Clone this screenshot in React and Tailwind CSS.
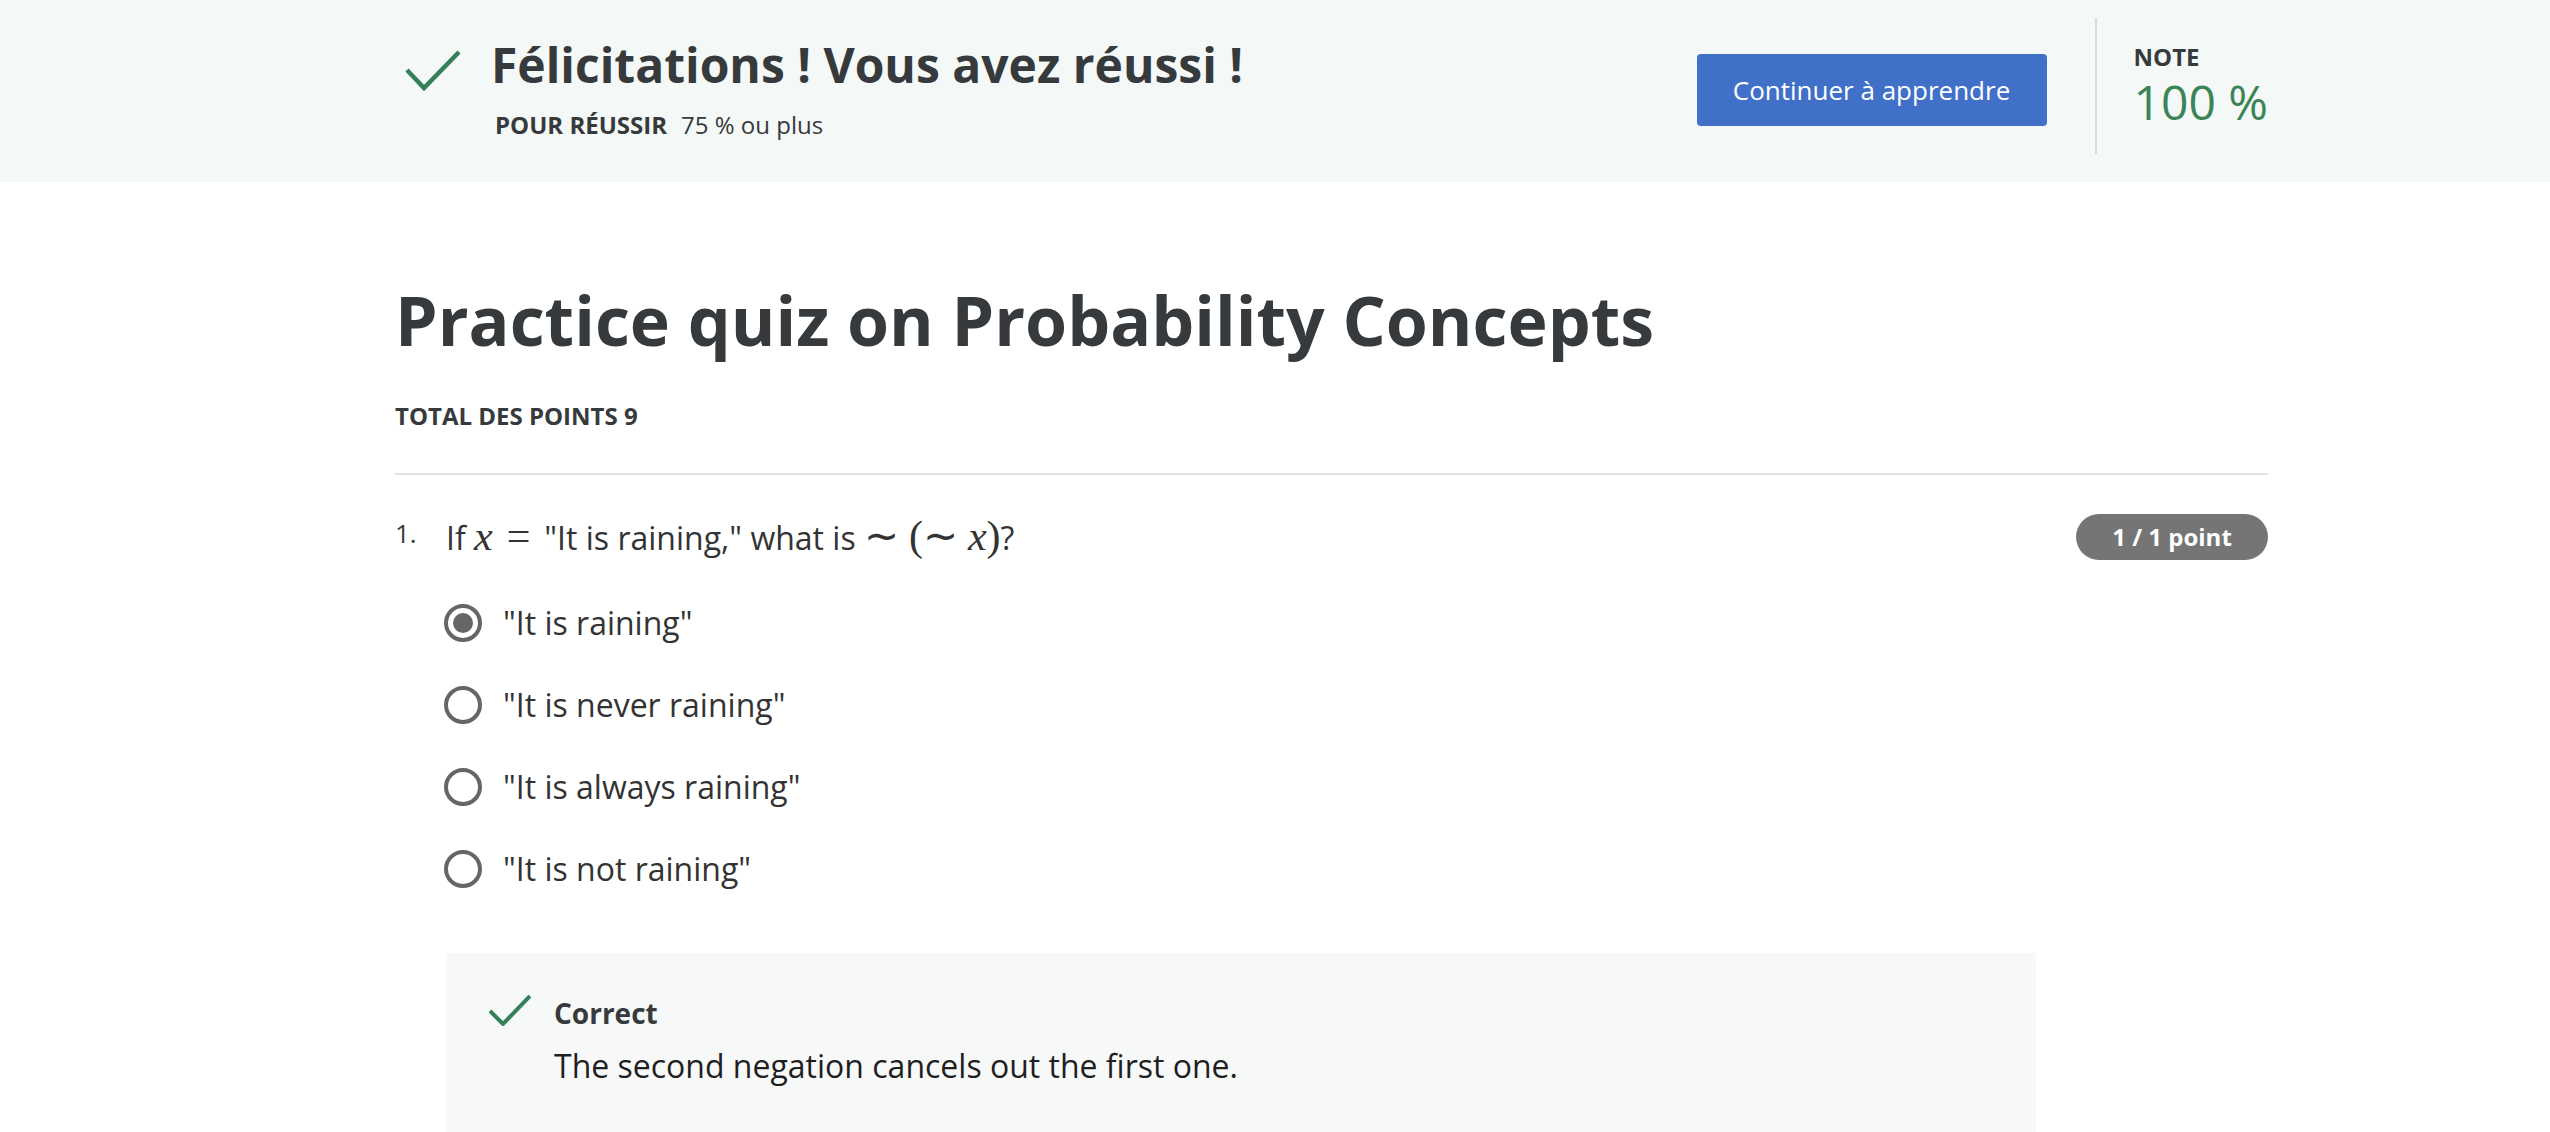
import React from "react";

const CheckMark = ({ className, w, h, points, stroke }) => (
  <svg className={className} width={w} height={h} viewBox={`0 0 ${w} ${h}`} fill="none">
    <polyline points={points} stroke="#33805a" strokeWidth={stroke} strokeLinecap="butt" strokeLinejoin="miter" />
  </svg>
);

const Radio = ({ checked }) => (
  <div className="w-[38px] h-[38px] rounded-full border-[4px] border-[#666666] flex items-center justify-center shrink-0">
    {checked && <div className="w-[20px] h-[20px] rounded-full bg-[#666666]" />}
  </div>
);

const options = [
  { label: '"It is raining"', checked: true },
  { label: '"It is never raining"' },
  { label: '"It is always raining"' },
  { label: '"It is not raining"' },
];

// math bits, roughly like KaTeX output
const MathX = () => <span className="font-['Liberation_Serif',serif] italic text-[42px]">x</span>;
const MathOp = ({ children, className = "" }) => (
  <span className={`font-['Liberation_Serif',serif] text-[42px] ${className}`}>{children}</span>
);

export default function App() {
  return (
    <div className="min-h-[1132px] bg-white font-['Open_Sans',sans-serif] text-[#373a3c]">
      {/* result banner */}
      <div className="bg-[#f4f8f6] h-[182px]">
        <div className="ml-[395px] w-[1873px] flex justify-between">
          <div className="flex pt-[35px]">
            <CheckMark className="ml-[10px] mt-[14px] shrink-0" w={56} h={42} points="2,21 19,39 54,3" stroke={4.5} />
            <div className="ml-[30px]">
              <h1 className="text-[48px] leading-[60px] font-bold">Félicitations ! Vous avez réussi !</h1>
              <div className="mt-[14px] ml-[4px] text-[24px] leading-[32px] flex gap-[14px]">
                <span className="font-bold">POUR RÉUSSIR</span>
                <span>75 % ou plus</span>
              </div>
            </div>
          </div>
          <div className="flex items-start pt-[18px]">
            <button className="mt-[36px] w-[350px] h-[72px] rounded-[4px] bg-[#4070c8] text-white text-[26px]">
              Continuer à apprendre
            </button>
            <div className="ml-[48px] w-[2px] h-[136px] bg-[#dadddc]" />
            <div className="ml-[37px] pt-[24px]">
              <div className="text-[24px] leading-[30px] font-bold">NOTE</div>
              <div className="mt-[2px] text-[48px] leading-[56px] text-[#3a8457]">100 %</div>
            </div>
          </div>
        </div>
      </div>

      {/* quiz body */}
      <div className="ml-[395px] w-[1873px]">
        <h2 className="mt-[96px] text-[68px] leading-[84px] font-bold">Practice quiz on Probability Concepts</h2>
        <div className="mt-[38px] text-[24px] leading-[32px] font-bold">TOTAL DES POINTS 9</div>
        <div className="mt-[41px] h-[2px] bg-[#e1e1e1]" />

        <div className="mt-[38px] flex items-center justify-between">
          <div className="flex items-start">
            <span className="w-[51px] text-[26px] leading-[40px]">1.</span>
            <span className="text-[32px] leading-[46px] text-[#333333] whitespace-nowrap">
              If <MathX />
              <MathOp className="mx-[14px]">=</MathOp>"It is raining," what is{" "}
              <MathOp>∼</MathOp>
              <MathOp className="ml-[10px]">(</MathOp>
              <MathOp>∼</MathOp>
              <span className="ml-[10px]"><MathX /></span>
              <MathOp>)</MathOp>?
            </span>
          </div>
          <div className="w-[192px] h-[46px] rounded-full bg-[#757575] text-white text-[24px] font-bold flex items-center justify-center">
            1 / 1 point
          </div>
        </div>

        <div className="mt-[21px] pl-[49px]">
          {options.map((o) => (
            <div key={o.label} className="h-[82px] flex items-center gap-[21px]">
              <Radio checked={o.checked} />
              <span className="text-[32px] text-[#333333]">{o.label}</span>
            </div>
          ))}
        </div>

        <div className="mt-[43px] ml-[51px] w-[1590px] bg-[#f7f9f8] pt-[42px] pl-[43px] pb-[60px]">
          <div className="flex items-start">
            <CheckMark className="shrink-0" w={42} h={31} points="1,16 14,29 41,1" stroke={4} />
            <div className="ml-[23px]">
              <div className="text-[28px] leading-[36px] font-bold">Correct</div>
              <div className="mt-[13px] text-[32px] leading-[44px] text-[#1f1f1f]">
                The second negation cancels out the first one.
              </div>
            </div>
          </div>
        </div>
      </div>
    </div>
  );
}
